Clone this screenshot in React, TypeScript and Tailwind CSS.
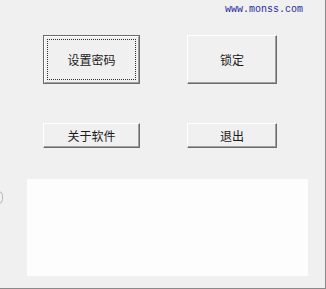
import React from 'react';

const cjk = { fontFamily: '"Noto Sans CJK SC", "Liberation Sans", sans-serif' };

const Btn: React.FC<{ label: string; tall?: boolean; wide?: boolean; focused?: boolean }> = ({ label, tall, wide, focused }) => {
  const size = `${wide ? 'w-[97px]' : 'w-[90px]'} ${tall ? 'h-[49px]' : 'h-[25px]'}`;
  if (focused) {
    return (
      <button className={`${size} border border-[#6b6b6b] bg-[#f0f0f0] p-0`}>
        <div className="w-full h-full border-t border-l border-white border-r border-b border-r-[#a0a0a0] border-b-[#a0a0a0] p-[2px]">
          <div className="w-full h-full border border-dotted border-[#333] flex items-center justify-center text-[12px] text-[#1a1a1a]" style={cjk}>
            {label}
          </div>
        </div>
      </button>
    );
  }
  return (
    <button
      className={`${size} bg-[#f0f0f0] border border-t-white border-l-white border-r-[#6b6b6b] border-b-[#6b6b6b] shadow-[inset_-1px_-1px_0_#a0a0a0] flex items-center justify-center text-[12px] text-[#1a1a1a]`}
      style={cjk}
    >
      {label}
    </button>
  );
};

export default function App() {
  return (
    <div className="relative w-[326px] h-[289px] bg-[#f0f0f0] border-r border-b border-r-[#8a8a8a] border-b-[#8a8a8a] overflow-hidden">
      <div className="flex justify-end pr-[22px] pt-[4px] h-[16px]">
        <span className="text-[10px] leading-[12px] text-[#2a2aa0]" style={{ fontFamily: '"Liberation Mono", monospace' }}>
          www.monss.com
        </span>
      </div>

      <div className="ml-[43px] mt-[19px] grid grid-cols-[97px_90px] gap-x-[47px] gap-y-[39px]">
        <Btn label="设置密码" tall wide focused />
        <Btn label="锁定" tall />
        <Btn label="关于软件" wide />
        <Btn label="退出" />
      </div>

      <div className="ml-[27px] mt-[31px] w-[281px] h-[97px] bg-[#fdfdfd]" />

      <span className="absolute left-[-6px] top-[191px] w-[9px] h-[13px] rounded-full border border-[#b8b8b8]" />
    </div>
  );
}
